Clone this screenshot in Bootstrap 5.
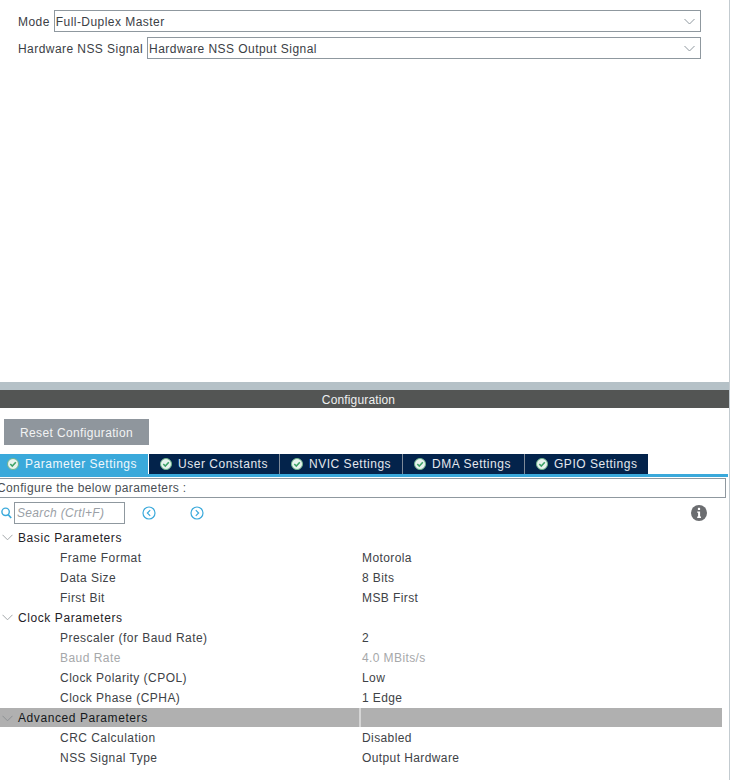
<!DOCTYPE html>
<html lang="en">
<head>
<meta charset="utf-8">
<title>Configuration</title>
<link href="https://cdn.jsdelivr.net/npm/bootstrap@5.3.0/dist/css/bootstrap.min.css" rel="stylesheet">
<style>
html,body{height:100%;overflow:hidden}
body{font-family:"Liberation Sans",Arial,sans-serif;font-size:12px;color:#3b4045;background:#fff;line-height:20px}
.shell{width:730px;height:780px;border-right:1px solid #c3cbd0;display:flex;flex-direction:column}
.mode-area{height:382px;padding:10px 28px 0 18px;display:flex;flex-direction:column;gap:5px}
.mode-row{display:flex;align-items:center;gap:4px;height:22px;letter-spacing:.44px}
.mode-row>span{padding-top:1px}
.fake-select{flex:1;height:22px;border:1px solid #8f989f;padding:1px 1px 0;display:flex;align-items:center;justify-content:space-between;line-height:20px;letter-spacing:.45px}
.fake-select svg{margin-right:4px;margin-top:-1px}
.grey-band{height:8px;background:#b5c1c7}
.title-band{height:18px;background:#535554;color:#eef0f0;text-align:center;line-height:20px;padding-right:12px;letter-spacing:.15px}
.reset-wrap{padding:11px 0 9px 4px;line-height:0}
.reset-btn{width:145px;height:26px;background:#8f969d;color:#f2f3f4;border:0;border-radius:0;padding:1px 0 0;font-size:12px;letter-spacing:.36px;line-height:26px;font-family:inherit}
.tab-strip{display:flex;height:23px;border-bottom:3px solid #3aa9db;width:728px}
.tab-item{height:20px;background:#03234b;color:#e4e8ee;display:flex;align-items:center;gap:6px;padding-left:11px;border-right:1px solid #7f8b99;letter-spacing:.52px;line-height:20px}
.tab-item.on{background:#3aa9db;color:#f1f8fc;padding-left:7px;width:149px;border-right-color:#fff}
.tab-a{width:131px}.tab-b{width:123px}.tab-c{width:122px}.tab-d{width:123px;border-right:0}
.cfg-box{width:726px;height:20px;margin-top:1px;border:1px solid #8f989f;border-left:0;line-height:18px;white-space:nowrap;overflow:hidden;letter-spacing:.38px;color:#4a4f55;text-indent:-3px}
.tool-row{height:29px;display:flex;align-items:center;padding:1px 23px 0 1px;width:730px}
.search-box{width:111px;height:22px;border:1px solid #8f989f;margin-left:2px;padding-left:2px;color:#9aa0a6;font-style:italic;line-height:21px;letter-spacing:.33px}
.nav-a{margin-left:17px}.nav-b{margin-left:34px}
.info-i{margin-left:auto}
.tree-row{height:20px;width:722px;display:flex;color:#3e4246;letter-spacing:.46px;line-height:22px}
.tree-row .lbl{width:361px;padding-left:60px;flex:none}
.tree-row .val{flex:1;padding-left:1px;letter-spacing:.4px}
.tree-row.head{color:#1f2226;letter-spacing:.58px}
.tree-row.head .lbl{padding-left:18px;position:relative}
.caret-mark{position:absolute;left:2px;top:7px}
.tree-row.dim{color:#a6a8aa}
.tree-row.sel{background:#b0b0b0;color:#15181b;height:19px;margin-top:1px;line-height:20px}
.tree-row.sel .lbl{width:359px;margin-right:2px}
.tree-row.sel .gap-mark{width:2px;background:#d5d5d5;margin-left:-2px;flex:none}
</style>
</head>
<body>
<div class="shell">
  <div class="mode-area">
    <div class="mode-row"><span>Mode</span>
      <div class="fake-select"><span>Full-Duplex Master</span><svg width="11" height="7" viewBox="0 0 11 7"><path d="M.5 1 5.5 6 10.5 1" fill="none" stroke="#8f989f" stroke-width="1"/></svg></div></div>
    <div class="mode-row"><span>Hardware NSS Signal</span>
      <div class="fake-select"><span>Hardware NSS Output Signal</span><svg width="11" height="7" viewBox="0 0 11 7"><path d="M.5 1 5.5 6 10.5 1" fill="none" stroke="#8f989f" stroke-width="1"/></svg></div></div>
  </div>
  <div class="grey-band"></div>
  <div class="title-band">Configuration</div>
  <div class="reset-wrap"><button type="button" class="btn reset-btn">Reset Configuration</button></div>
  <div class="tab-strip">
    <div class="tab-item on"><svg width="12" height="12" viewBox="0 0 12 12"><circle cx="6" cy="6" r="5.5" fill="#e9f3ee" stroke="#6fb58c"/><path d="M3.3 6 5.3 8 8.8 4.3" fill="none" stroke="#3fa368" stroke-width="1.6"/></svg><span>Parameter Settings</span></div>
    <div class="tab-item tab-a"><svg width="12" height="12" viewBox="0 0 12 12"><circle cx="6" cy="6" r="5.5" fill="#e9f3ee" stroke="#6fb58c"/><path d="M3.3 6 5.3 8 8.8 4.3" fill="none" stroke="#3fa368" stroke-width="1.6"/></svg><span>User Constants</span></div>
    <div class="tab-item tab-b"><svg width="12" height="12" viewBox="0 0 12 12"><circle cx="6" cy="6" r="5.5" fill="#e9f3ee" stroke="#6fb58c"/><path d="M3.3 6 5.3 8 8.8 4.3" fill="none" stroke="#3fa368" stroke-width="1.6"/></svg><span>NVIC Settings</span></div>
    <div class="tab-item tab-c"><svg width="12" height="12" viewBox="0 0 12 12"><circle cx="6" cy="6" r="5.5" fill="#e9f3ee" stroke="#6fb58c"/><path d="M3.3 6 5.3 8 8.8 4.3" fill="none" stroke="#3fa368" stroke-width="1.6"/></svg><span>DMA Settings</span></div>
    <div class="tab-item tab-d"><svg width="12" height="12" viewBox="0 0 12 12"><circle cx="6" cy="6" r="5.5" fill="#e9f3ee" stroke="#6fb58c"/><path d="M3.3 6 5.3 8 8.8 4.3" fill="none" stroke="#3fa368" stroke-width="1.6"/></svg><span>GPIO Settings</span></div>
  </div>
  <div class="cfg-box">Configure the below parameters :</div>
  <div class="tool-row">
    <svg width="11" height="12" viewBox="0 0 11 12"><circle cx="4.6" cy="4.8" r="3.7" fill="none" stroke="#3aa9db" stroke-width="1.4"/><path d="M7.2 7.6 10.2 11" stroke="#3aa9db" stroke-width="1.6"/></svg>
    <div class="search-box">Search (Crtl+F)</div>
    <svg class="nav-a" width="14" height="14" viewBox="0 0 14 14"><circle cx="7" cy="7" r="6" fill="none" stroke="#3aa9db" stroke-width="1.2"/><path d="M8.2 4.2 5.4 7 8.2 9.8" fill="none" stroke="#3aa9db" stroke-width="1.2"/></svg>
    <svg class="nav-b" width="14" height="14" viewBox="0 0 14 14"><circle cx="7" cy="7" r="6" fill="none" stroke="#3aa9db" stroke-width="1.2"/><path d="M5.8 4.2 8.6 7 5.8 9.8" fill="none" stroke="#3aa9db" stroke-width="1.2"/></svg>
    <svg class="info-i" width="16" height="16" viewBox="0 0 16 16"><circle cx="8" cy="8" r="8" fill="#6b6d70"/><rect x="6.9" y="2.8" width="2.2" height="2.2" fill="#fff"/><path d="M6.2 6.4H9.1V11.6H10V13H6.2V11.6H7.1V7.8H6.2Z" fill="#fff"/></svg>
  </div>
  <div class="tree-row head"><div class="lbl"><svg class="caret-mark" width="11" height="7" viewBox="0 0 11 7"><path d="M.5 .8 5.5 5.8 10.5 .8" fill="none" stroke="#a3a7aa"/></svg>Basic Parameters</div><div class="val"></div></div>
  <div class="tree-row"><div class="lbl">Frame Format</div><div class="val">Motorola</div></div>
  <div class="tree-row"><div class="lbl">Data Size</div><div class="val">8 Bits</div></div>
  <div class="tree-row"><div class="lbl">First Bit</div><div class="val">MSB First</div></div>
  <div class="tree-row head"><div class="lbl"><svg class="caret-mark" width="11" height="7" viewBox="0 0 11 7"><path d="M.5 .8 5.5 5.8 10.5 .8" fill="none" stroke="#a3a7aa"/></svg>Clock Parameters</div><div class="val"></div></div>
  <div class="tree-row"><div class="lbl">Prescaler (for Baud Rate)</div><div class="val">2</div></div>
  <div class="tree-row dim"><div class="lbl">Baud Rate</div><div class="val">4.0 MBits/s</div></div>
  <div class="tree-row"><div class="lbl">Clock Polarity (CPOL)</div><div class="val">Low</div></div>
  <div class="tree-row"><div class="lbl">Clock Phase (CPHA)</div><div class="val">1 Edge</div></div>
  <div class="tree-row head sel"><div class="lbl"><svg class="caret-mark" width="11" height="7" viewBox="0 0 11 7"><path d="M.5 .8 5.5 5.8 10.5 .8" fill="none" stroke="#8d9194"/></svg>Advanced Parameters</div><div class="gap-mark"></div><div class="val"></div></div>
  <div class="tree-row"><div class="lbl">CRC Calculation</div><div class="val">Disabled</div></div>
  <div class="tree-row"><div class="lbl">NSS Signal Type</div><div class="val">Output Hardware</div></div>
</div>
<script src="https://cdn.jsdelivr.net/npm/bootstrap@5.3.0/dist/js/bootstrap.bundle.min.js"></script>
</body>
</html>
